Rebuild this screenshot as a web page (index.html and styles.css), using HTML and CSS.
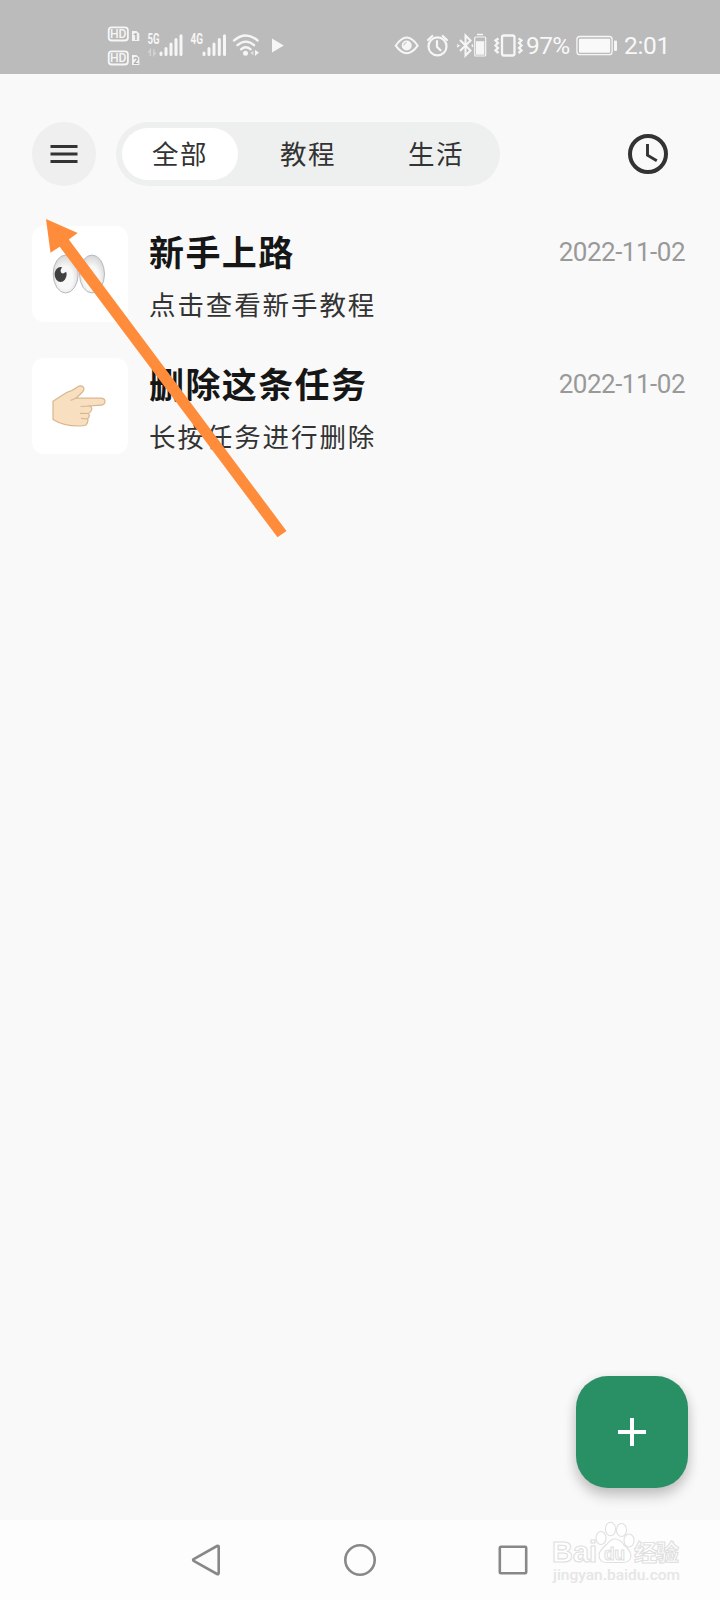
FILE: index.html
```html
<!DOCTYPE html>
<html lang="zh-CN">
<head>
<meta charset="utf-8">
<title>任务</title>
<link rel="stylesheet" href="styles.css">
</head>
<body>
<div class="screen">
  <header class="status">
    <div class="status-left">
      <svg width="34" height="74" viewBox="107 0 34 74">
        <rect x="108.7" y="27.3" width="19.2" height="13.2" rx="3" fill="none" stroke="#f6f6f6" stroke-width="1.8"/>
        <text class="hd" x="110" y="38.3" textLength="16.5" lengthAdjust="spacingAndGlyphs">HD</text>
        <path d="M132 31h4.5l2.800 2.800V41H132z" fill="#f3f3f3"/><text class="sim" x="133" y="39.6">1</text>
        <rect x="108.7" y="51.3" width="19.2" height="13.2" rx="3" fill="none" stroke="#f6f6f6" stroke-width="1.8"/>
        <text class="hd" x="110" y="62.3" textLength="16.5" lengthAdjust="spacingAndGlyphs">HD</text>
        <path d="M132 55h4.5l2.800 2.800V65H132z" fill="#f3f3f3"/><text class="sim" x="133.200" y="63.600">2</text>
      </svg>
      <svg class="signal" width="38" height="74" viewBox="147 0 38 74">
        <text class="net" x="147.500" y="44" textLength="12" lengthAdjust="spacingAndGlyphs">5G</text>
        <path d="M150.300 56v-6l-2 2.500M153.800 49v6l2-2.500" fill="none" stroke="#d2d2d2" stroke-width="1.500"/>
        <path d="M161 54.500v-1.500M166 54.500v-6M171 54.500v-10.500M176 54.500v-15M181 54.500v-18.800" class="bars"/>
      </svg>
      <svg class="signal2" width="38" height="74" viewBox="190 0 38 74">
        <text class="net" x="190.500" y="44" textLength="12.500" lengthAdjust="spacingAndGlyphs">4G</text>
        <path d="M204 54.500v-1.500M209 54.500v-6M214 54.500v-10.500M219.300 54.500v-15M224.500 54.500v-18.800" class="bars"/>
      </svg>
      <svg class="wifi" width="28" height="74" viewBox="232 0 28 74">
        <path d="M234 40.500q11.800-10 23.600 0M237.500 45.200q8.300-7.200 16.600 0M241 49.300q4.800-4 9.600 0" fill="none" stroke="#f6f6f6" stroke-width="2.300" stroke-linecap="round"/>
        <circle cx="245.500" cy="53.300" r="2.500" fill="#f6f6f6"/>
        <path d="M253.500 50.500l-3 2.500 3 2.500z" fill="#dedede"/><path d="M255 50v6l4-3.500z" fill="#f6f6f6"/>
      </svg>
      <svg class="play" width="14" height="74" viewBox="271 0 14 74"><path d="M272 38.500v14l11.800-7z" fill="#f6f6f6"/></svg>
    </div>
    <div class="status-right">
      <svg width="130" height="74" viewBox="394 0 130 74" fill="none" stroke="#f6f6f6" stroke-width="2">
        <path d="M395.700 45.700Q406.700 29.500 417.700 45.700Q406.700 61 395.700 45.700Z"/>
        <circle cx="406.700" cy="45.500" r="5" fill="#f6f6f6" stroke="none"/><path d="M403.800 45.300a3 3 0 0 1 2.700-2.800" stroke="#bbb" stroke-width="1"/>
        <circle cx="437.500" cy="46.400" r="9" stroke-width="2.200"/>
        <path d="M437 41.200v5.500l3.500 3.500M428 40l4.300-4M447 40l-4.300-4" stroke-width="2.200" stroke-linecap="round"/>
        <path d="M460 40l10.500 10.500-5 5V35.500l5 5L460 51"/><path d="M457 44.500l2 1.200-2 1.200M473 44.500l-1 1.200 1 1.200" stroke-width="1.200"/>
        <path d="M477 34.500h6" stroke-width="1.500"/><rect x="474.700" y="37" width="11" height="19" rx="1" stroke-width="1.200"/><rect x="476" y="41.200" width="8.300" height="13.500" fill="#f6f6f6" stroke="none"/>
        <rect x="502" y="35.500" width="12.500" height="20" rx="2" stroke-width="2.300"/>
        <path d="M498.500 38.500l-3 2 2.500 2.500-2.500 2.500 2.500 2.500-2.500 2.500 3 2.500M518.500 38.500l3 2-2.500 2.500 2.500 2.500-2.500 2.500 2.500 2.500-3 2.500" stroke-width="2.300"/>
      </svg>
      <span class="status-text percent">97%</span>
      <svg class="battery" width="42" height="74" viewBox="576 0 42 74">
        <rect x="576.900" y="36.500" width="35.200" height="18.200" rx="3" fill="none" stroke="#f6f6f6" stroke-width="1.300"/>
        <rect x="579" y="38.700" width="31.200" height="14" rx="1" fill="#f9f9f9"/><rect x="614" y="40.500" width="3" height="10.500" rx="1" fill="#f6f6f6"/>
      </svg>
      <span class="status-text time">2:01</span>
    </div>
  </header>

  <nav class="toolbar">
    <button class="menu" aria-label="菜单"><svg width="28" height="20" viewBox="0 0 28 20"><path d="M.500 2.500h27M.500 10h27M.500 17.500h27" stroke="#333" stroke-width="3"/></svg></button>
    <div class="tabs">
      <div class="tab active">全部</div>
      <div class="tab">教程</div>
      <div class="tab">生活</div>
    </div>
    <svg class="clock" width="40" height="40" viewBox="0 0 40 40"><circle cx="20" cy="20" r="18" fill="none" stroke="#333" stroke-width="4"/><path d="M19.500 10v11.200l9.300 5.500" fill="none" stroke="#333" stroke-width="2.900"/></svg>
  </nav>

  <main class="list">
    <article class="task">
      <div class="tile">
        <svg width="54" height="42" viewBox="0 0 54 42">
          <defs><radialGradient id="eye" cx=".48" cy=".6" r=".6"><stop offset=".5" stop-color="#f8f8f8"/><stop offset="1" stop-color="#d5d5d7"/></radialGradient></defs>
          <ellipse cx="13.700" cy="21" rx="12.500" ry="19" fill="url(#eye)" stroke="#b9b9bc"/>
          <ellipse cx="40" cy="21" rx="12.500" ry="19" fill="url(#eye)" stroke="#b9b9bc"/>
          <ellipse cx="8.600" cy="21.500" rx="6" ry="7.500" fill="#414141"/><path d="M8.500 18q.500-4 4-5l2.500 5.500-4 2q-2 0-2.500-2.500" fill="#f7f7f7"/>
        </svg>
      </div>
      <div class="body"><h2>新手上路</h2><p>点击查看新手教程</p></div>
      <time>2022-11-02</time>
    </article>
    <article class="task">
      <div class="tile">
        <svg width="54" height="42" viewBox="0 0 54 42">
          <path d="M1 16.200L14.500 7.500Q21 5.500 25.500 2Q28.500-.200 31 1.700Q33 4 30.500 7L24 13.200H48.500Q53 13.300 53 16.500Q53 20 48.500 20.200L38 21Q40.500 22.500 39.500 25Q39 27.500 36.500 28.500Q38.500 31 35.500 34Q37 36 34 40Q32 41 27 41Q11 41 1 34.500Z" fill="#f8dfbf" stroke="#d9b690" stroke-width="1.200"/>
          <path d="M24 13.200l-5 2M38 21l-9 .500M36.500 28.500l-8-.200M35.500 34l-6-.700" fill="none" stroke="#d9b690" stroke-width="1.200" stroke-linecap="round"/>
        </svg>
      </div>
      <div class="body"><h2>删除这条任务</h2><p>长按任务进行删除</p></div>
      <time>2022-11-02</time>
    </article>
  </main>

  <div class="fab-row"><button class="fab" aria-label="添加"><svg width="28" height="28" viewBox="0 0 28 28"><path d="M14 0v28M0 14h28" stroke="#fff" stroke-width="4"/></svg></button></div>

  <footer class="navbar">
    <svg width="30" height="34" viewBox="0 0 30 34"><path d="M2.700 16.200L26 3Q27.700 2.300 27.700 4v26Q27.700 31.700 26 31L2.700 17.800Q1.500 17 2.700 16.200Z" fill="none" stroke="#888" stroke-width="2.600"/></svg>
    <svg width="34" height="34" viewBox="0 0 34 34"><circle cx="17" cy="17" r="14.700" fill="none" stroke="#888" stroke-width="2.600"/></svg>
    <svg width="30" height="34" viewBox="0 0 30 34"><rect x="1.800" y="3.800" width="26.400" height="26.400" rx="1" fill="none" stroke="#888" stroke-width="2.600"/></svg>
  </footer>

  <svg class="arrow" width="250" height="330" viewBox="40 213 250 330"><path d="M46 219L77.700 233 68.800 239.500 286.500 531 277.500 537.300 59.700 246.700 50.500 252.800Z" fill="#ff8c3b"/></svg>

  <svg class="watermark" width="140" height="70" viewBox="548 1516 140 70">
    <g fill="#fff" stroke="#e0e0e0" stroke-width="1.100">
      <text class="wm-name" x="552" y="1561.500" textLength="45" lengthAdjust="spacingAndGlyphs">Bai</text>
      <ellipse cx="601" cy="1538" rx="5" ry="6.500"/><ellipse cx="610.500" cy="1529" rx="5" ry="6.700"/><ellipse cx="621.500" cy="1530" rx="5" ry="6.500"/><ellipse cx="629" cy="1540.500" rx="5" ry="6.500"/>
      <path d="M615 1539Q620 1539 624 1545Q631 1551 631 1556Q630 1563 622 1562.500H608Q599 1563 599 1555Q599 1551 607 1544Q611 1539 615 1539Z"/>
      <text class="wm-du" x="604" y="1560" textLength="21" lengthAdjust="spacingAndGlyphs">du</text>
      <text class="wm-cn" x="634" y="1561" textLength="45">经验</text>
    </g>
    <text class="wm-url" x="553" y="1579.500" textLength="127" lengthAdjust="spacingAndGlyphs">jingyan.baidu.com</text>
  </svg>
</div>
</body>
</html>
```
FILE: styles.css
```css
* { box-sizing: border-box; }
body { margin: 0; font-family: Roboto, "Noto Sans CJK SC", sans-serif; background: #f9f9f9; }
svg { display: block; flex: none; }
h2, p { margin: 0; }
button { border: 0; padding: 0; display: flex; align-items: center; justify-content: center; }

.screen { position: relative; width: 720px; height: 1600px; display: flex; flex-direction: column; overflow: hidden; background: #f9f9f9; }

.status { height: 74px; flex: none; display: flex; justify-content: space-between; padding: 0 52px 0 107px; background: #bbb; }
.status-left, .status-right { display: flex; }
.signal { margin-left: 6px; }
.signal2 { margin-left: 5px; }
.wifi { margin-left: 4px; }
.play { margin-left: 11px; }
.bars { fill: none; stroke: #f6f6f6; stroke-width: 3; stroke-linecap: round; }
.hd { font: 500 13px Roboto, sans-serif; fill: #f6f6f6; }
.sim { font: 700 9px Roboto, sans-serif; fill: #aaa; }
.net { font: 700 14px Roboto, sans-serif; fill: #f6f6f6; }
.status-text { font-size: 24.5px; line-height: 74px; padding-top: 9px; height: 74px; color: #f8f8f8; white-space: nowrap; }
.percent { width: 44px; margin-left: 2px; letter-spacing: -0.6px; }
.battery { margin-left: 6px; }
.time { width: 44px; margin-left: 6px; letter-spacing: -0.3px; }

.toolbar { margin-top: 48px; padding: 0 52px 0 32px; height: 64px; flex: none; display: flex; align-items: center; }
.menu { width: 64px; height: 64px; border-radius: 50%; background: #efefef; }
.tabs { margin-left: 20px; width: 384px; height: 64px; padding: 6px; border-radius: 32px; background: #eef0ef; display: flex; gap: 12px; }
.tab { width: 116px; height: 52px; border-radius: 26px; font-family: "Noto Sans CJK SC", sans-serif; font-size: 26.5px; line-height: 49px; letter-spacing: 1.5px; text-align: center; color: #333; }
.tab.active { background: #fff; }
.clock { margin-left: auto; }

.list { margin-top: 40px; padding: 0 35px 0 32px; display: flex; flex-direction: column; gap: 36px; }
.task { height: 96px; display: flex; align-items: flex-start; }
.tile { width: 96px; height: 96px; padding-right: 2px; border-radius: 12px; background: #fff; display: flex; align-items: center; justify-content: center; }
.body { margin-left: 21px; font-family: "Noto Sans CJK SC", sans-serif; }
.body h2 { font-size: 35px; font-weight: 700; line-height: 50px; letter-spacing: 1.4px; color: #161616; }
.body p { margin-top: 9px; font-size: 26.5px; line-height: 38px; letter-spacing: 1.9px; color: #333; }
.task time { margin-left: auto; font-size: 26px; line-height: 53px; letter-spacing: -0.5px; color: #999; }

.fab-row { margin-top: auto; padding: 0 32px 32px; display: flex; justify-content: flex-end; }
.fab { width: 112px; height: 112px; border-radius: 32px; background: #298f64; box-shadow: 0 8px 14px rgba(0, 0, 0, .2), 0 2px 12px rgba(0, 0, 0, .08); }

.navbar { height: 80px; flex: none; display: flex; align-items: center; justify-content: space-between; padding: 0 192px 0 191px; background: #fdfdfd; }

.arrow { position: absolute; left: 40px; top: 213px; }
.watermark { position: absolute; left: 548px; top: 1516px; }
.wm-name { font: 700 29px "Liberation Sans", sans-serif; }
.wm-du { font: 700 19px "Liberation Sans", sans-serif; }
.wm-cn { font: 700 23px "Noto Sans CJK SC", sans-serif; }
.wm-url { font: 500 14px Roboto, sans-serif; fill: #e6e6e6; }
```
